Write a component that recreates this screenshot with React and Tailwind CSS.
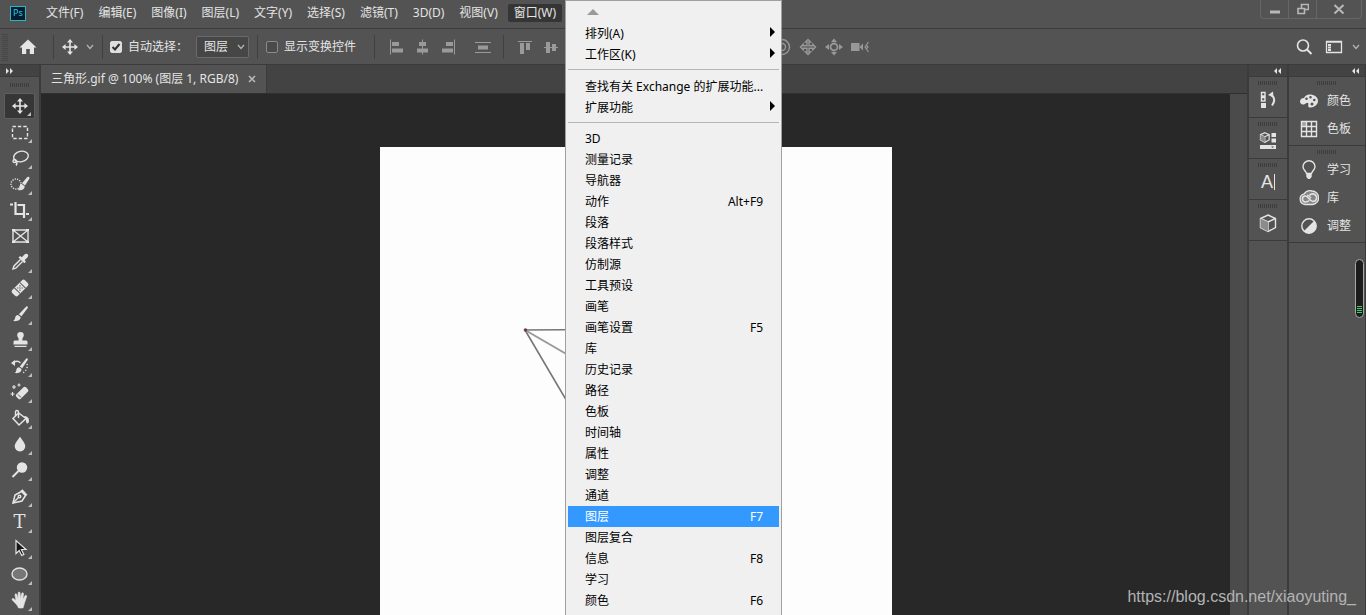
import { clsx } from 'clsx';

const MENUS = ['文件(F)', '编辑(E)', '图像(I)', '图层(L)', '文字(Y)', '选择(S)', '滤镜(T)', '3D(D)', '视图(V)', '窗口(W)'];

const WINDOW_MENU = [
  [
    { label: '排列(A)', sub: true },
    { label: '工作区(K)', sub: true },
  ],
  [
    { label: '查找有关 Exchange 的扩展功能...' },
    { label: '扩展功能', sub: true },
  ],
  [
    { label: '3D' },
    { label: '测量记录' },
    { label: '导航器' },
    { label: '动作', keys: 'Alt+F9' },
    { label: '段落' },
    { label: '段落样式' },
    { label: '仿制源' },
    { label: '工具预设' },
    { label: '画笔' },
    { label: '画笔设置', keys: 'F5' },
    { label: '库' },
    { label: '历史记录' },
    { label: '路径' },
    { label: '色板' },
    { label: '时间轴' },
    { label: '属性' },
    { label: '调整' },
    { label: '通道' },
    { label: '图层', keys: 'F7', active: true },
    { label: '图层复合' },
    { label: '信息', keys: 'F8' },
    { label: '学习' },
    { label: '颜色', keys: 'F6' },
  ],
];

function Svg({ size = 20, children, className }) {
  return (
    <svg width={size} height={size} viewBox={`0 0 ${size} ${size}`} fill="none" stroke="currentColor" strokeWidth="1.4" className={clsx('shrink-0', className)} aria-hidden="true">
      {children}
    </svg>
  );
}

const solid = { fill: 'currentColor', stroke: 'none' };

function MoveIcon() {
  return (
    <Svg>
      <path d="M10 4v12M4 10h12" strokeWidth="1.6" />
      <path {...solid} d="M10 2l3 3.600H7zM10 18l3-3.600H7zM2 10l3.600-3v6zM18 10l-3.600-3v6z" />
    </Svg>
  );
}

// Toolbar, top to bottom. corner: false = tool without a flyout
const TOOLS = [
  { name: '移动工具', active: true, icon: <MoveIcon /> },
  { name: '矩形选框工具', icon: <Svg><rect x="2.5" y="4.5" width="15" height="12" strokeDasharray="3.4 2" /></Svg> },
  {
    name: '套索工具',
    icon: (
      <Svg>
        <ellipse cx="11" cy="8.5" rx="7.4" ry="5.2" transform="rotate(-12 11 8.5)" />
        <path d="M4.500 11.500c-2 .5-2 3 0 3s2.500-2.500 0-3M6 13.500c1.500 1 1 2.500 0 4" />
      </Svg>
    ),
  },
  {
    name: '快速选择工具',
    icon: (
      <Svg>
        <circle cx="6" cy="10" r="5" strokeDasharray="1.200 1.200" />
        <path {...solid} d="M19 3c.7.600.6 1.400.2 2l-4.200 6.500-3-2.200 4.900-5.900c.6-.6 1.300-.9 2.100-.4zM11.300 9.700l3.400 2.600c0 3-2.900 4.500-7.200 3.700 1.600-.6 1.700-1.800 2-3.200.2-1.200.7-2.500 1.800-3.100z" />
      </Svg>
    ),
  },
  {
    name: '裁剪工具',
    icon: <Svg><path strokeWidth="2.200" d="M0 4.500h3M5.500 2v12H14M7.500 5H14v13M16 14h3" /></Svg>,
  },
  {
    name: '图框工具',
    corner: false,
    icon: <Svg><path strokeWidth="1.400" d="M3 4h15v12H3zM3 4l15 12M18 4L3 16" /><path {...solid} d="M2 3h3v2H2zM16 3h3v2h-3zM2 15h3v2H2zM16 15h3v2h-3z" /></Svg>,
  },
  {
    name: '吸管工具',
    icon: (
      <Svg>
        <path d="M10.500 7.500L3.800 14.200 3 17l2.800-.8 6.700-6.700" />
        <path {...solid} d="M8.500 5.500l1.700-1.500 1.700 1.200 2.300-2.500c2.600-2.600 5.600.2 3 3l-2.500 2.300 1.200 1.800-1.600 1.500z" />
      </Svg>
    ),
  },
  {
    name: '污点修复画笔工具',
    icon: (
      <Svg>
        <g transform="rotate(-45 10 10)">
          <rect {...solid} x="1" y="6" width="18" height="8" rx="2" />
          <path d="M6.200 6v8M13.800 6v8" stroke="#535353" strokeWidth="1" />
          <path d="M8 8.500h1M11 8.500h1M8 11.500h1M11 11.500h1M9.500 10h1" stroke="#3c3c3c" strokeWidth="1.200" />
        </g>
      </Svg>
    ),
  },
  {
    name: '画笔工具',
    icon: <Svg><path {...solid} d="M17.500 2.500c.6.500.4 1.200 0 1.800l-6 8-2.600-2 6.900-7.300c.5-.6 1.100-.9 1.700-.5zM8 11l2.600 2c.2 2.700-2.400 4.700-7.600 4 1.700-.8 1.800-1.900 2.200-3.400.3-1.400 1.300-2.500 2.800-2.600z" /></Svg>,
  },
  {
    name: '仿制图章工具',
    icon: <Svg><path {...solid} d="M10.500 2a3.300 3.300 0 013.300 3.300c0 1.600-1.400 2.200-1.400 4v1.200h3.600c.8 0 1.500.7 1.500 1.500v2.500H3.500V12c0-.8.7-1.500 1.500-1.500h3.600V9.300c0-1.800-1.400-2.400-1.400-4A3.300 3.300 0 0110.500 2zM4.500 15.700h12v1.300h-12z" /></Svg>,
  },
  {
    name: '历史记录画笔工具',
    icon: (
      <Svg>
        <path {...solid} d="M17.500 2.500c.6.500.4 1.200 0 1.800l-5.300 8-2.400-1.800 6-7.500c.5-.6 1.100-.9 1.700-.5zM9 11.200l2.500 1.900c.2 2.700-2.400 4.700-7 4 1.500-.8 1.500-1.900 1.900-3.400.3-1.400 1.100-2.500 2.600-2.500zM1 7l4-3v6z" />
        <path d="M4 6.500c2-1.500 4.500-1.500 6.500.5" />
        <path d="M17 8c1 3-.5 7-4.500 9" strokeDasharray="1.200 1.800" />
      </Svg>
    ),
  },
  {
    name: '橡皮擦工具',
    icon: (
      <Svg>
        <path {...solid} d="M13.500 5.300c.7-.7 1.800-.7 2.500 0l1.800 1.900c.7.700.7 1.800 0 2.500l-7 7c-.7.7-1.800.7-2.500 0l-1.900-1.900c-.7-.7-.7-1.800 0-2.500z" />
        <path d="M8 12.500l3 3" stroke="#535353" strokeWidth="1" />
        <path strokeWidth="1.200" d="M4 3v4M2 5h4M2.500 10v4M.5 12h4M9 1.500v3M7.500 3h3" />
      </Svg>
    ),
  },
  {
    name: '油漆桶工具',
    icon: (
      <Svg>
        <path strokeWidth="1.500" d="M8.500 5L3 10.500l6 6.500 7-6.500z" />
        <path d="M5.500 8V4c0-2 3-2 3 0v6" />
        <path {...solid} d="M14 8c3 0 5 1.500 5 4.500 0 2-.8 3-1.500 3s-1.500-.8-1.500-2.500c0-2-.8-3.500-2-5z" />
      </Svg>
    ),
  },
  { name: '模糊工具', icon: <Svg><path {...solid} d="M10 2.500c1 2.500 5.300 6.300 5.300 9.800A5.200 5.200 0 0110 17.500a5.200 5.200 0 01-5.300-5.200c0-3.500 4.300-7.300 5.300-9.800z" /></Svg> },
  { name: '减淡工具', icon: <Svg><circle {...solid} cx="12" cy="7.500" r="5.200" /><path d="M8.500 11L2.500 17" strokeWidth="2" /></Svg> },
  {
    name: '钢笔工具',
    icon: (
      <Svg>
        <path d="M3 17l2-8 6.500-3.500 4 4L12 15z" strokeWidth="1.500" />
        <path d="M3 17l6-6" />
        <circle cx="9.500" cy="10.500" r="1.300" />
        <path d="M11.500 4l5 5.500" strokeWidth="2.600" />
      </Svg>
    ),
  },
  { name: '横排文字工具', icon: <span className="w-5 text-center font-['DejaVu_Serif',serif] text-lg leading-5">T</span> },
  { name: '路径选择工具', icon: <Svg><path d="M6 2.500v13l3.200-3 2.500 5 2.200-1.100-2.500-4.900H16z" fill="#161616" strokeWidth="1.200" /></Svg> },
  { name: '椭圆工具', icon: <Svg><ellipse cx="9.500" cy="10" rx="7.500" ry="6" fill="#777" /></Svg> },
  {
    name: '抓手工具',
    icon: (
      <Svg>
        <path
          {...solid}
          stroke="currentColor"
          strokeWidth=".6"
          d="M6.500 14.500L2.300 10c-.8-1 .4-2 1.400-1.300L6 10.500 5 5c-.2-1.300 1.500-1.600 1.800-.4L8 9l.2-6c0-1.300 1.800-1.300 1.900 0L10.500 9l1.200-5.500c.3-1.200 2-.9 1.800.4L12.800 9.500l2.200-3.700c.6-1 2.100-.3 1.600.9l-2.300 6.800c-.5 2-1 4-1.300 4.500H8.500c-.3-1-1-2.300-2-3.500z"
        />
      </Svg>
    ),
  },
];

function Grip() {
  return <div className="mx-auto h-1 w-5 bg-[repeating-linear-gradient(90deg,#3d3d3d_0_1px,transparent_1px_2px)]" />;
}

function Divider({ className }) {
  return <div className={clsx('h-6 w-px bg-[#404040]', className)} />;
}

function Chevron({ className }) {
  return (
    <svg width="8" height="6" viewBox="0 0 8 6" fill="none" stroke="#b5b5b5" strokeWidth="1.200" className={clsx('shrink-0', className)} aria-hidden="true">
      <path d="M1 1l3 3.500L7 1" />
    </svg>
  );
}

function Check({ label, ...props }) {
  return (
    <label className="relative flex items-center gap-1.5">
      <input type="checkbox" className="peer size-3 appearance-none rounded-xs border border-[#8a8a8a] bg-[#4a4a4a] checked:border-[#dedede] checked:bg-[#dedede]" {...props} />
      <svg width="12" height="12" viewBox="0 0 12 12" fill="none" stroke="#2f2f2f" strokeWidth="2" className="absolute left-0 hidden peer-checked:block" aria-hidden="true">
        <path d="M2.500 6L5 8.500l4.500-5.500" />
      </svg>
      <span>{label}</span>
    </label>
  );
}

function IconButton({ name, className, children }) {
  return (
    <button type="button" aria-label={name} className={clsx('flex shrink-0 items-center justify-center', className)}>
      {children}
    </button>
  );
}

function MenuBar() {
  return (
    <header className="flex h-[29px] shrink-0 items-start justify-between border-b border-[#3b3b3b]">
      <nav className="flex items-center pt-1">
        <span className="mr-5 ml-2.5 flex h-[15px] w-4 items-center justify-center border border-[#2bb5c4] bg-[#031f2f] text-[9px] text-[#2fc3e0]">Ps</span>
        {MENUS.map((m, i) => (
          <button
            key={m}
            type="button"
            className={clsx('h-[18px] rounded-xs whitespace-nowrap', i === MENUS.length - 1 ? 'bg-[#353535] px-1.5' : i === MENUS.length - 2 ? 'mr-2.5' : 'mr-[15px]')}
          >
            {m}
          </button>
        ))}
      </nav>
      <div className="mr-1 flex h-[19px] divide-x divide-[#666] rounded-b border border-t-0 border-[#666] text-[#b8b8b8]">
        <IconButton name="最小化" className="w-7">
          <Svg size={12}><path d="M1 9h10" strokeWidth="3" /></Svg>
        </IconButton>
        <IconButton name="还原" className="w-7">
          <Svg size={12}><path d="M4.500 5V1.500h7v5H8M1 5.500h6.500v5H1z" strokeWidth="1.600" /></Svg>
        </IconButton>
        <IconButton name="关闭" className="w-11">
          <Svg size={12}><path d="M1.500 2l9 8.500M10.500 2l-9 8.500" strokeWidth="2" /></Svg>
        </IconButton>
      </div>
    </header>
  );
}

function OptionsBar() {
  return (
    <div className="flex h-9 shrink-0 items-center border-b border-[#3b3b3b]">
      <div className="ml-0.5 h-7 w-1.5 bg-[repeating-linear-gradient(0deg,#474747_0_1px,transparent_1px_2px)]" />
      <IconButton name="主页" className="ml-2.5 text-[#e6e6e6]">
        <Svg><path {...solid} d="M10 2.500L1.500 10.500H4V17h4.200v-5h3.600v5H16v-6.500h2.500z" /></Svg>
      </IconButton>
      <Divider className="ml-[15px]" />
      <IconButton name="移动工具" className="ml-1.5"><MoveIcon /></IconButton>
      <Chevron className="ml-1.5" />
      <Divider className="ml-2" />
      <div className="ml-[7px]"><Check label="自动选择：" defaultChecked /></div>
      <label className="relative ml-2 flex items-center">
        <select aria-label="自动选择" className="h-[22px] w-[53px] appearance-none rounded-xs border border-[#6a6a6a] bg-[#464646] pl-[7px]">
          <option>图层</option>
        </select>
        <Chevron className="pointer-events-none absolute right-1" />
      </label>
      <Divider className="ml-2" />
      <div className="ml-2"><Check label="显示变换控件" /></div>
      <Divider className="ml-[18px]" />
      <div className="ml-3 flex gap-1.5 text-[#9a9a9a]">
        <IconButton name="左对齐">
          <Svg><path d="M3.500 2.500v15" strokeWidth="1" /><path {...solid} d="M5 5h7v4H5zM5 11.500h11v4H5z" /></Svg>
        </IconButton>
        <IconButton name="水平居中对齐">
          <Svg><path d="M9.500 2.500v15" strokeWidth="1" /><path {...solid} d="M6 5h7v4H6zM4 11.500h11v4H4z" /></Svg>
        </IconButton>
        <IconButton name="右对齐">
          <Svg><path d="M15.500 2.500v15" strokeWidth="1" /><path {...solid} d="M7 5h7v4H7zM3 11.500h11v4H3z" /></Svg>
        </IconButton>
        <IconButton name="垂直分布" className="ml-2">
          <Svg><path d="M2 5.500h16M2 15.500h16" strokeWidth="1.200" /><path {...solid} d="M5 8.500h10v4H5z" /></Svg>
        </IconButton>
      </div>
      <Divider className="ml-2.5" />
      <div className="ml-3 flex gap-1.5 text-[#9a9a9a]">
        <IconButton name="顶对齐">
          <Svg><path d="M2 4.500h14" strokeWidth="1" /><path {...solid} d="M4 6h4v11H4zM10 6h4v7h-4z" /></Svg>
        </IconButton>
        <IconButton name="垂直居中对齐">
          <Svg><path d="M2 10.500h14" strokeWidth="1" /><path {...solid} d="M4 5h4v11H4zM10 7h4v7h-4z" /></Svg>
        </IconButton>
      </div>
      <div className="ml-[210px] flex items-center gap-1.5 text-[#989898]">
        <IconButton name="滚动">
          <Svg><circle cx="10" cy="10" r="7.500" /><circle cx="10" cy="10" r="3.500" /></Svg>
        </IconButton>
        <IconButton name="平移">
          <Svg>
            <path strokeWidth="1.400" d="M10 2.500l2.500 2.500H11v3.800h3.800V7.300L17.500 10l-2.700 2.700v-1.500H11V15h1.500L10 17.500 7.500 15H9v-3.800H5.200v1.500L2.500 10l2.700-2.700v1.500H9V5H7.500z" />
          </Svg>
        </IconButton>
        <IconButton name="滑动">
          <Svg>
            <circle cx="10" cy="10" r="3.500" strokeWidth="1.800" />
            <path {...solid} d="M10 1.500L13 5H7zM10 18.500L13 15H7zM1 10l4-3v6zM19 10l-4-3v6z" />
          </Svg>
        </IconButton>
        <IconButton name="缩放">
          <Svg>
            <path {...solid} d="M1 6h8.500v8H1zM9.500 10L13 6.500v7z" />
            <path d="M18.500 5l-3.500 5 3.500 5M16 8l2 2-2 2" strokeWidth="1.200" />
          </Svg>
        </IconButton>
      </div>
      <div className="mr-1.5 ml-auto flex items-center">
        <IconButton name="搜索">
          <Svg><circle cx="9" cy="8.500" r="5.500" strokeWidth="1.600" /><path d="M13 12.500l4.500 4.500" strokeWidth="2" /></Svg>
        </IconButton>
        <IconButton name="工作区" className="ml-2.5 gap-2">
          <Svg><path d="M2.500 4.500h15v11h-15zM2 5h16" strokeWidth="1.300" /><path {...solid} d="M4 7h3v2H4zM4 9.500h3v2H4zM4 12h3v2H4z" /></Svg>
          <Chevron />
        </IconButton>
      </div>
    </div>
  );
}

function Toolbar() {
  return (
    <aside className="flex w-[41px] shrink-0 flex-col border-r-2 border-[#3b3b3b]">
      <div className="flex h-3 items-center border-b border-[#3b3b3b] bg-[#434343] pl-1.5">
        <Svg size={8}><path {...solid} d="M0 1L3 4 0 7zM4 1L7 4 4 7z" /></Svg>
      </div>
      <div className="flex h-4 items-center"><Grip /></div>
      <div className="flex flex-col px-1">
        {TOOLS.map((t) => (
          <button
            key={t.name}
            type="button"
            aria-label={t.name}
            className={clsx('relative flex h-[26px] items-center justify-center', t.active && 'rounded-xs border border-[#5e5e5e] bg-[#363636]')}
          >
            {t.icon}
            {t.corner !== false && (
              <svg width="4" height="4" viewBox="0 0 4 4" className="absolute right-[3px] bottom-0.5" aria-hidden="true">
                <path d="M4 0v4H0z" fill="#bdbdbd" />
              </svg>
            )}
          </button>
        ))}
      </div>
    </aside>
  );
}

function Workspace() {
  return (
    <main className="flex min-w-0 grow flex-col">
      <div className="flex h-[29px] shrink-0 border-b border-[#303030] bg-[#434343]">
        <div className="flex items-center gap-2.5 border-r border-[#3b3b3b] bg-[#535353] px-2.5">
          <span className="whitespace-nowrap">三角形.gif @ 100% (图层 1, RGB/8)</span>
          <IconButton name="关闭文档" className="text-[#b8b8b8]">
            <Svg size={8}><path d="M1 1l6 6M7 1L1 7" strokeWidth="1.600" /></Svg>
          </IconButton>
        </div>
      </div>
      <div className="flex min-h-0 grow">
        <div className="min-w-0 grow overflow-hidden bg-[#282828] pt-[53px]">
          <div className="mx-auto h-full w-[512px] bg-[#fdfdfd]">
            <svg width="512" height="460" viewBox="0 0 512 460" fill="none" aria-hidden="true">
              <path d="M145 183l110 187 110-188.500z" stroke="#777" strokeWidth="1.600" />
              <path d="M145 183l155 90" stroke="#999" strokeWidth="2" />
              <circle cx="145.500" cy="183" r="1.800" fill="#6b4040" />
            </svg>
          </div>
        </div>
        <div className="w-[17px] shrink-0 bg-[#4b4b4b]" />
      </div>
    </main>
  );
}

function Collapse() {
  return (
    <div className="flex h-3 items-center justify-end border-b border-[#3b3b3b] bg-[#434343] pr-1.5">
      <Svg size={8}><path {...solid} d="M4 1L1 4l3 3zM8 1L5 4l3 3z" /></Svg>
    </div>
  );
}

const cube = (
  <>
    <path d="M10 2l7.500 3.500v9L10 18.500l-7.500-4v-9z" />
    <path d="M2.500 5.500L10 9l7.500-3.500M10 9v9.500" />
    <path d="M10 9v9.500l-7.500-4v-9z" fill="#8b8b8b" stroke="none" />
  </>
);

const DOCK = [
  {
    name: '历史记录',
    icon: (
      <Svg>
        <path d="M3.500 2.500h3.500v3.500h-3.500zM3.500 7.500h3.500v3.500h-3.500z" />
        <path {...solid} d="M3 13h5v5H3zM10 5l5-3.500.5 6z" />
        <path d="M13.500 5c3 2.500 3.500 6.500.5 10.500" strokeWidth="2" />
      </Svg>
    ),
  },
  {
    name: '属性',
    icon: (
      <Svg>
        <g transform="translate(1 .5) scale(.58)" strokeWidth="2">{cube}</g>
        <path {...solid} d="M13.500 2H18v4h-4.500zM13.500 7.500H18v4h-4.500zM2 14h16v4H2z" />
        <path d="M13 15.500h3l-1.500 1.500z" fill="#535353" stroke="none" />
      </Svg>
    ),
  },
  { name: '字符', icon: <span className="border-r border-current pr-px font-['Liberation_Sans',sans-serif] text-lg leading-4">A</span> },
  { name: '3D', icon: <Svg>{cube}</Svg> },
];

const PANELS = [
  [
    {
      label: '颜色',
      icon: (
        <Svg>
          <path fill="currentColor" stroke="none" fillRule="evenodd" d="M10.500 3.500c4.800 0 8.500 2.600 8.500 6.300 0 3.800-3.500 6.700-7.500 6.700-2 0-2.700-1.200-2.200-2.600.5-1.500-.4-2.500-1.600-2-1.800.8-2.400 1.900-4.200 1.500C1.800 13 1 11.800 1 10.500c0-2.300 2.300-3.500 4-3.400C6 4.800 8 3.500 10.500 3.500zM7.500 6.500a1.300 1.300 0 100 2.600 1.300 1.300 0 000-2.600zm4-1.500a1.300 1.300 0 100 2.600 1.300 1.300 0 000-2.600zm3.800 2.700a1.300 1.300 0 100 2.600 1.300 1.300 0 000-2.600zM13 11.500a1.500 1.500 0 100 3 1.500 1.500 0 000-3z" />
        </Svg>
      ),
    },
    {
      label: '色板',
      icon: (
        <Svg>
          <path {...solid} fill="#a0a0a0" d="M2 2h5v5H2z" />
          <path d="M2.500 2.500h15v15h-15zM7.500 2.500v15M12.500 2.500v15M2.500 7.500h15M2.500 12.500h15" strokeWidth="1.400" />
        </Svg>
      ),
    },
  ],
  [
    {
      label: '学习',
      icon: (
        <Svg>
          <path d="M7.500 13.500C7.500 11.500 4 10 4 6.800a6 6 0 0112 0c0 3.200-3.500 4.700-3.500 6.700z" />
          <path {...solid} d="M7.300 13.500h5.400v3.200L11 19H9l-1.700-2.300z" />
        </Svg>
      ),
    },
    {
      label: '库',
      icon: (
        <Svg>
          <path d="M6 16.500a5.400 5.400 0 01-.8-10.600C7 2.800 10.500 2.300 13 3a7 6.800 0 01.8 13.500z" fill="#858585" strokeWidth="1.300" />
          <path d="M10.200 12.500C9 13.600 7.800 14 6.300 14a3 3 0 01.2-6c2.700 0 4.200 5.500 7.400 5.500a4 3.800 0 10-3.500-6" strokeWidth="1.600" />
          <path d="M8 7.200c1.800 0 2.800 1.300 4.200 3" strokeWidth="1.200" />
        </Svg>
      ),
    },
    {
      label: '调整',
      icon: <Svg><circle cx="10" cy="10" r="7.200" /><path {...solid} d="M15.300 4.700L4.700 15.300A7.500 7.500 0 0015.300 4.700z" /></Svg>,
    },
  ],
];

function Docks() {
  return (
    <>
      <aside className="w-[42px] shrink-0 border-x-2 border-[#3b3b3b]">
        <Collapse />
        {DOCK.map((d) => (
          <section key={d.name} className="flex h-[41px] flex-col border-b border-[#3b3b3b] pt-1">
            <Grip />
            <IconButton name={d.name} className="h-[30px] w-full">{d.icon}</IconButton>
          </section>
        ))}
      </aside>
      <aside className="w-[77px] shrink-0 border-r border-[#3b3b3b]">
        <Collapse />
        {PANELS.map((group, i) => (
          <section key={i} className="border-b border-[#3b3b3b] pt-1">
            <Grip />
            <div className="py-0.5">
              {group.map((p) => (
                <button key={p.label} type="button" className="flex h-7 w-full items-center gap-2 pl-2.5">
                  {p.icon}
                  <span>{p.label}</span>
                </button>
              ))}
            </div>
          </section>
        ))}
      </aside>
    </>
  );
}

function WindowMenu() {
  return (
    <div role="menu" className="absolute top-0 left-[565px] h-full w-[217px] overflow-hidden border border-b-0 border-[#a0a0a0] bg-[#f0f0f0] px-0.5 text-black">
      <div className="flex h-[22px] items-center pl-[19px]">
        <svg width="12" height="6" viewBox="0 0 12 6" aria-hidden="true"><path d="M6 0l6 6H0z" fill="#999" /></svg>
      </div>
      {WINDOW_MENU.map((group, gi) => (
        <div key={gi} className={clsx(gi > 0 && 'mt-1 border-t border-[#b5b5b5]', gi === 1 && 'pt-1.5', gi === 2 && 'pt-[5px]')}>
          {group.map((item) => (
            <button
              key={item.label}
              type="button"
              role="menuitem"
              className={clsx('relative flex h-[21px] w-full items-center justify-between pr-4 pl-[17px] whitespace-nowrap', item.active && 'bg-[#3399ff] text-white')}
            >
              <span>{item.label}</span>
              {item.keys && <span>{item.keys}</span>}
              {item.sub && (
                <svg width="5" height="10" viewBox="0 0 5 10" className="absolute top-1 right-1" aria-hidden="true">
                  <path d="M0 0l5 5-5 5z" fill="#000" />
                </svg>
              )}
            </button>
          ))}
        </div>
      ))}
    </div>
  );
}

export default function App() {
  return (
    <div className="relative flex h-screen flex-col overflow-hidden bg-[#535353] font-['Noto_Sans','Noto_Sans_CJK_SC',sans-serif] text-xs text-[#e4e4e4]">
      <MenuBar />
      <OptionsBar />
      <div className="flex min-h-0 grow">
        <Toolbar />
        <Workspace />
        <Docks />
      </div>
      <WindowMenu />
      {/* floating level meter on the right edge */}
      <div className="absolute top-[259px] right-0.5 flex h-[59px] w-[9px] flex-col justify-end rounded-full border border-[#a8a8a8] bg-[#1c1c1c] px-px pb-1">
        <div className="h-2 bg-[repeating-linear-gradient(0deg,#3fcf6a_0_1px,transparent_1px_2px)]" />
      </div>
      <p className="absolute right-2.5 bottom-1.5 font-['Liberation_Sans',sans-serif] text-base text-[#b4b4b4]">https://blog.csdn.net/xiaoyuting_</p>
    </div>
  );
}
